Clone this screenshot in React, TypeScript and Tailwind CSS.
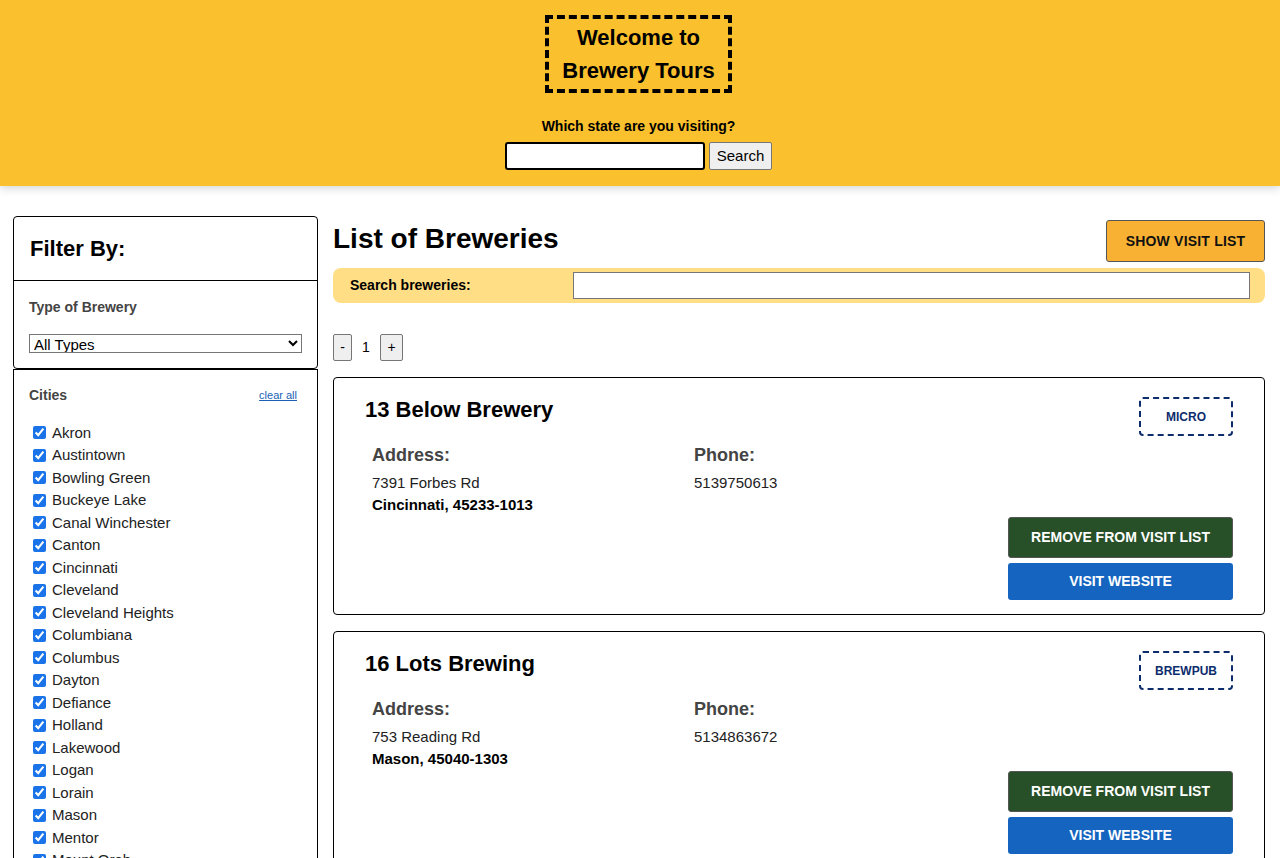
import { useState } from 'react';

type Brewery = {
  name: string;
  type: string;
  street: string;
  city: string;
  postal: string;
  phone: string;
};

const CITIES = [
  'Akron', 'Austintown', 'Bowling Green', 'Buckeye Lake', 'Canal Winchester', 'Canton',
  'Cincinnati', 'Cleveland', 'Cleveland Heights', 'Columbiana', 'Columbus', 'Dayton',
  'Defiance', 'Holland', 'Lakewood', 'Logan', 'Lorain', 'Mason', 'Mentor', 'Mount Orab',
  'Newark', 'Toledo',
];

const BREWERIES: Brewery[] = [
  { name: '13 Below Brewery', type: 'micro', street: '7391 Forbes Rd', city: 'Cincinnati', postal: '45233-1013', phone: '5139750613' },
  { name: '16 Lots Brewing', type: 'brewpub', street: '753 Reading Rd', city: 'Mason', postal: '45040-1303', phone: '5134863672' },
];

function Header() {
  return (
    <header className="bg-[#fbc02d] flex flex-col items-center pt-[15px] pb-[16px] pr-[3px] shadow-[0_3px_8px_rgba(0,0,0,0.15)] relative z-10">
      <h1 className="border-4 border-dashed border-black px-[13px] py-[2px] text-center text-[22px] leading-[33px] font-bold text-black">
        Welcome to<br />Brewery Tours
      </h1>
      <p className="mt-[25px] text-[14px] leading-[16px] font-bold text-black">Which state are you visiting?</p>
      <form className="mt-[8px] flex gap-[4px]" onSubmit={e => e.preventDefault()}>
        <input className="w-[200px] h-[28px] bg-white border-2 border-black rounded-[3px] px-1 text-[14px] outline-none" />
        <button className="h-[28px] w-[63px] bg-[#efefef] border border-[#767676] rounded-[2px] text-[15px] text-black">Search</button>
      </form>
    </header>
  );
}

function Sidebar() {
  const [checked, setChecked] = useState<string[]>(CITIES);
  return (
    <aside className="w-[305px] shrink-0">
      <div className="border border-black rounded-[4px]">
        <div className="h-[64px] flex items-center px-4 border-b border-black">
          <h2 className="text-[22px] font-bold text-black">Filter By:</h2>
        </div>
        <div className="pt-[18px] pb-[15px] px-[15px]">
          <h3 className="text-[14px] leading-[16px] font-bold text-[#444]">Type of Brewery</h3>
          <select className="block mt-[19px] w-[273px] h-[19px] border border-[#767676] text-[15px] leading-[17px] text-black bg-white">
            <option>All Types</option>
            <option>Micro</option>
            <option>Regional</option>
            <option>Brewpub</option>
          </select>
        </div>
      </div>
      <div className="border border-black pt-[17px] px-[15px] pb-4">
        <div className="flex items-center justify-between">
          <h3 className="text-[14px] leading-[16px] font-bold text-[#444]">Cities</h3>
          <a href="#" className="text-[11px] text-[#1a5fb4] underline mr-[5px]" onClick={e => { e.preventDefault(); setChecked([]); }}>clear all</a>
        </div>
        <ul className="mt-[18px]">
          {CITIES.map(c => (
            <li key={c} className="h-[22.5px] flex items-center">
              <input
                type="checkbox"
                className="ml-[4px] mr-[6px] w-[13px] h-[13px] accent-[#1a73e8]"
                checked={checked.includes(c)}
                onChange={() => setChecked(prev => prev.includes(c) ? prev.filter(x => x !== c) : [...prev, c])}
              />
              <label className="text-[15px] text-[#222]">{c}</label>
            </li>
          ))}
        </ul>
      </div>
    </aside>
  );
}

function BreweryCard({ b }: { b: Brewery }) {
  return (
    <li className="border border-black rounded-[4px] pt-[19px] pb-[14px] pl-[31px] pr-[31px]">
      <div className="flex items-start justify-between">
        <h2 className="text-[22px] leading-[25px] font-bold text-black">{b.name}</h2>
        <div className="w-[94px] h-[39px] border-2 border-dashed border-[#0d2c6c] rounded-[4px] flex items-center justify-center text-[12px] font-bold text-[#0d2c6c] uppercase">
          {b.type}
        </div>
      </div>
      <div className="mt-[9px] pl-[7px] flex">
        <section className="w-[322px]">
          <h3 className="text-[18px] leading-[21px] font-bold text-[#444]">Address:</h3>
          <p className="mt-[6px] text-[15px] leading-[22px] text-[#222]">{b.street}</p>
          <p className="text-[15px] leading-[22px] font-bold text-black">{b.city}, {b.postal}</p>
        </section>
        <section>
          <h3 className="text-[18px] leading-[21px] font-bold text-[#444]">Phone:</h3>
          <p className="mt-[6px] text-[15px] leading-[22px] text-[#222]">{b.phone}</p>
        </section>
      </div>
      <div className="mt-[1px] flex justify-end">
        <div className="w-[225px] flex flex-col gap-[5px]">
          <button className="h-[41px] bg-[#285028] border border-[#555] rounded-[3px] text-white text-[14px] font-bold">REMOVE FROM VISIT LIST</button>
          <button className="h-[37px] bg-[#1565c0] rounded-[3px] text-white text-[14px] font-bold">VISIT WEBSITE</button>
        </div>
      </div>
    </li>
  );
}

export default function App() {
  const [page, setPage] = useState(1);
  return (
    <div className="min-h-screen bg-white font-['Liberation_Sans',Arial,sans-serif]">
      <Header />
      <div className="flex gap-[15px] pl-[13px] pr-[15px] pt-[30px]">
        <Sidebar />
        <main className="flex-1 min-w-0 pt-[4px]">
          <div className="flex items-start justify-between">
            <h2 className="mt-[3px] text-[28px] leading-[32px] font-bold text-black">List of Breweries</h2>
            <button className="w-[159px] h-[42px] bg-[#f8b133] border border-[#555] rounded-[3px] text-[14px] font-bold text-[#111] tracking-[0.2px]">SHOW VISIT LIST</button>
          </div>
          <form className="mt-[6px] h-[35px] bg-[#ffde85] rounded-[8px] flex items-center pr-[15px]" onSubmit={e => e.preventDefault()}>
            <label className="w-[240px] pl-[17px] text-[14px] font-bold text-black">Search breweries:</label>
            <input className="flex-1 h-[27px] bg-white border border-[#767676] outline-none" />
          </form>
          <div className="mt-[31px] flex items-center">
            <button onClick={() => setPage(p => Math.max(1, p - 1))} className="w-[19px] h-[27px] bg-[#efefef] border border-[#767676] rounded-[2px] text-[14px]">-</button>
            <span className="w-[28px] text-center text-[14px] text-black">{page}</span>
            <button onClick={() => setPage(p => p + 1)} className="w-[23px] h-[27px] bg-[#efefef] border border-[#767676] rounded-[2px] text-[14px]">+</button>
          </div>
          <ul className="mt-[16px] flex flex-col gap-[16px] pb-8">
            {BREWERIES.map(b => <BreweryCard key={b.name} b={b} />)}
          </ul>
        </main>
      </div>
    </div>
  );
}
